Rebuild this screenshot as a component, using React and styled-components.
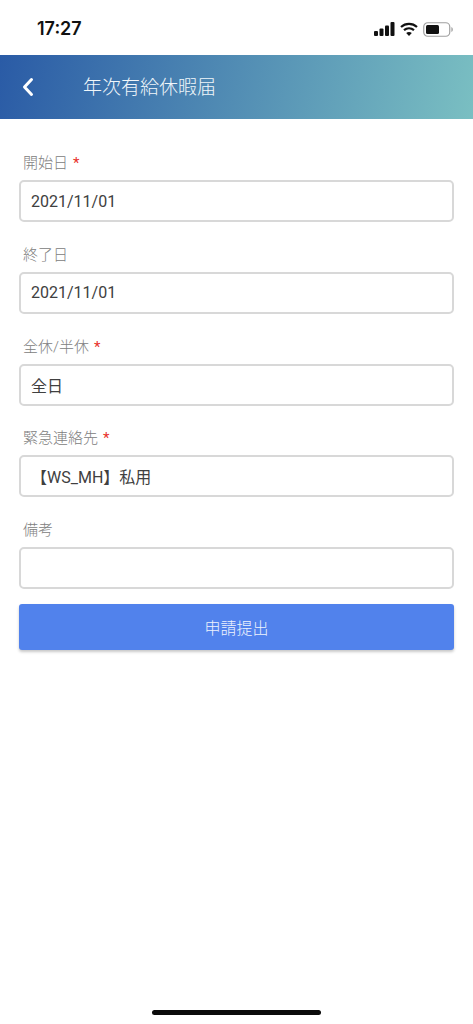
import React from 'react';
import styled, { createGlobalStyle } from 'styled-components';

const cjk = '"Roboto", "Noto Sans CJK JP", sans-serif';

const GlobalStyle = createGlobalStyle`
  html, body {
    margin: 0;
    padding: 0;
    background: #ffffff;
  }
  * {
    box-sizing: border-box;
  }
`;

const Page = styled.div`
  position: relative;
  width: 473px;
  height: 1024px;
  overflow: hidden;
  background: #ffffff;
  font-family: ${cjk};
`;

const StatusBar = styled.div`
  height: 55px;
  padding: 17px 20px 0 37px;
  display: flex;
  justify-content: space-between;
  align-items: flex-start;
`;

const Clock = styled.span`
  font-family: "Inter", "Liberation Sans", sans-serif;
  font-size: 18px;
  line-height: 24px;
  font-weight: 600;
  color: #111111;
`;

const StatusIcons = styled.div`
  display: flex;
  align-items: center;
  gap: 5px;
  height: 24px;
`;

const Header = styled.header`
  height: 64px;
  display: flex;
  align-items: center;
  padding-left: 22px;
  background: linear-gradient(102deg, #2a5ba6 0%, #7abfc2 100%);
`;

const BackIcon = styled.svg`
  width: 12px;
  height: 20px;
  flex: none;
`;

const Title = styled.h1`
  margin: 2px 0 0 49px;
  font-size: 19px;
  line-height: 24px;
  font-weight: 300;
  color: #f0f6fa;
`;

const Form = styled.form`
  padding: 34px 19px 0;
  display: flex;
  flex-direction: column;
`;

const Field = styled.div`
  display: flex;
  flex-direction: column;
  margin-bottom: ${(p) => (p.$last ? '15px' : '22.75px')};
`;

const Label = styled.label`
  height: 20px;
  margin-bottom: 7px;
  padding-left: 4px;
  font-size: 15px;
  line-height: 20px;
  font-weight: 300;
  color: #808080;
`;

const Required = styled.span`
  margin-left: 5px;
  font-weight: 400;
  color: #e8312a;
`;

const Value = styled.div`
  height: 42px;
  padding: 0 10px;
  display: flex;
  align-items: center;
  border: 2px solid #d8d8d8;
  border-radius: 5px;
  background: #ffffff;
  font-size: 16px;
  color: #404040;
`;

const SubmitButton = styled.button`
  height: 46px;
  border: none;
  border-radius: 3px;
  background: #5182ec;
  box-shadow: 0 2px 3px rgba(0, 0, 0, 0.22);
  font-family: ${cjk};
  font-size: 16px;
  font-weight: 300;
  color: #eef3fd;
`;

const HomeIndicator = styled.div`
  position: absolute;
  left: 152px;
  bottom: 9px;
  width: 169px;
  height: 5px;
  border-radius: 3px;
  background: #0b0b0b;
`;

const fields = [
  { label: '開始日', value: '2021/11/01', required: true },
  { label: '終了日', value: '2021/11/01' },
  { label: '全休/半休', value: '全日', required: true },
  { label: '緊急連絡先', value: '【WS_MH】私用', required: true },
  { label: '備考', value: '', last: true },
];

function SignalIcon() {
  return (
    <svg width="21" height="14" viewBox="0 0 21 14" aria-hidden="true">
      <rect x="0" y="9" width="4" height="5" rx="1" fill="#111" />
      <rect x="5.5" y="6.5" width="4" height="7.5" rx="1" fill="#111" />
      <rect x="11" y="3.5" width="4" height="10.5" rx="1" fill="#111" />
      <rect x="16.5" y="0" width="4" height="14" rx="1" fill="#111" />
    </svg>
  );
}

function WifiIcon() {
  return (
    <svg width="18" height="14" viewBox="0 0 18 14" fill="none" aria-hidden="true">
      <path d="M1 5C5.6 .9 12.4 .9 17 5" stroke="#111" strokeWidth="2.2" />
      <path d="M4 8.2C6.9 5.7 11.1 5.7 14 8.2" stroke="#111" strokeWidth="2.2" />
      <path d="M9 14L6.2 11C7.8 9.7 10.2 9.7 11.8 11Z" fill="#111" />
    </svg>
  );
}

function BatteryIcon() {
  return (
    <svg width="30" height="15" viewBox="0 0 30 15" aria-hidden="true">
      <rect x="0.75" y="0.75" width="26" height="13.5" rx="4" fill="none" stroke="#a0a0a0" strokeWidth="1.2" />
      <rect x="3" y="3" width="13" height="9" rx="1.5" fill="#111" />
      <path d="M28.4 5C29.4 5.4 29.8 6.4 29.8 7.5C29.8 8.6 29.4 9.6 28.4 10Z" fill="#a0a0a0" />
    </svg>
  );
}

export default function App() {
  return (
    <Page>
      <GlobalStyle />
      <StatusBar>
        <Clock>17:27</Clock>
        <StatusIcons>
          <SignalIcon />
          <WifiIcon />
          <BatteryIcon />
        </StatusIcons>
      </StatusBar>
      <Header>
        <BackIcon viewBox="0 0 12 20" fill="none" aria-hidden="true">
          <path d="M9.5 2.5L2.5 10L9.5 17.5" stroke="#fff" strokeWidth="3" strokeLinecap="round" strokeLinejoin="round" />
        </BackIcon>
        <Title>年次有給休暇届</Title>
      </Header>
      <Form>
        {fields.map((f) => (
          <Field key={f.label} $last={f.last}>
            <Label>
              {f.label}
              {f.required && <Required>*</Required>}
            </Label>
            <Value>{f.value}</Value>
          </Field>
        ))}
        <SubmitButton type="button">申請提出</SubmitButton>
      </Form>
      <HomeIndicator />
    </Page>
  );
}
